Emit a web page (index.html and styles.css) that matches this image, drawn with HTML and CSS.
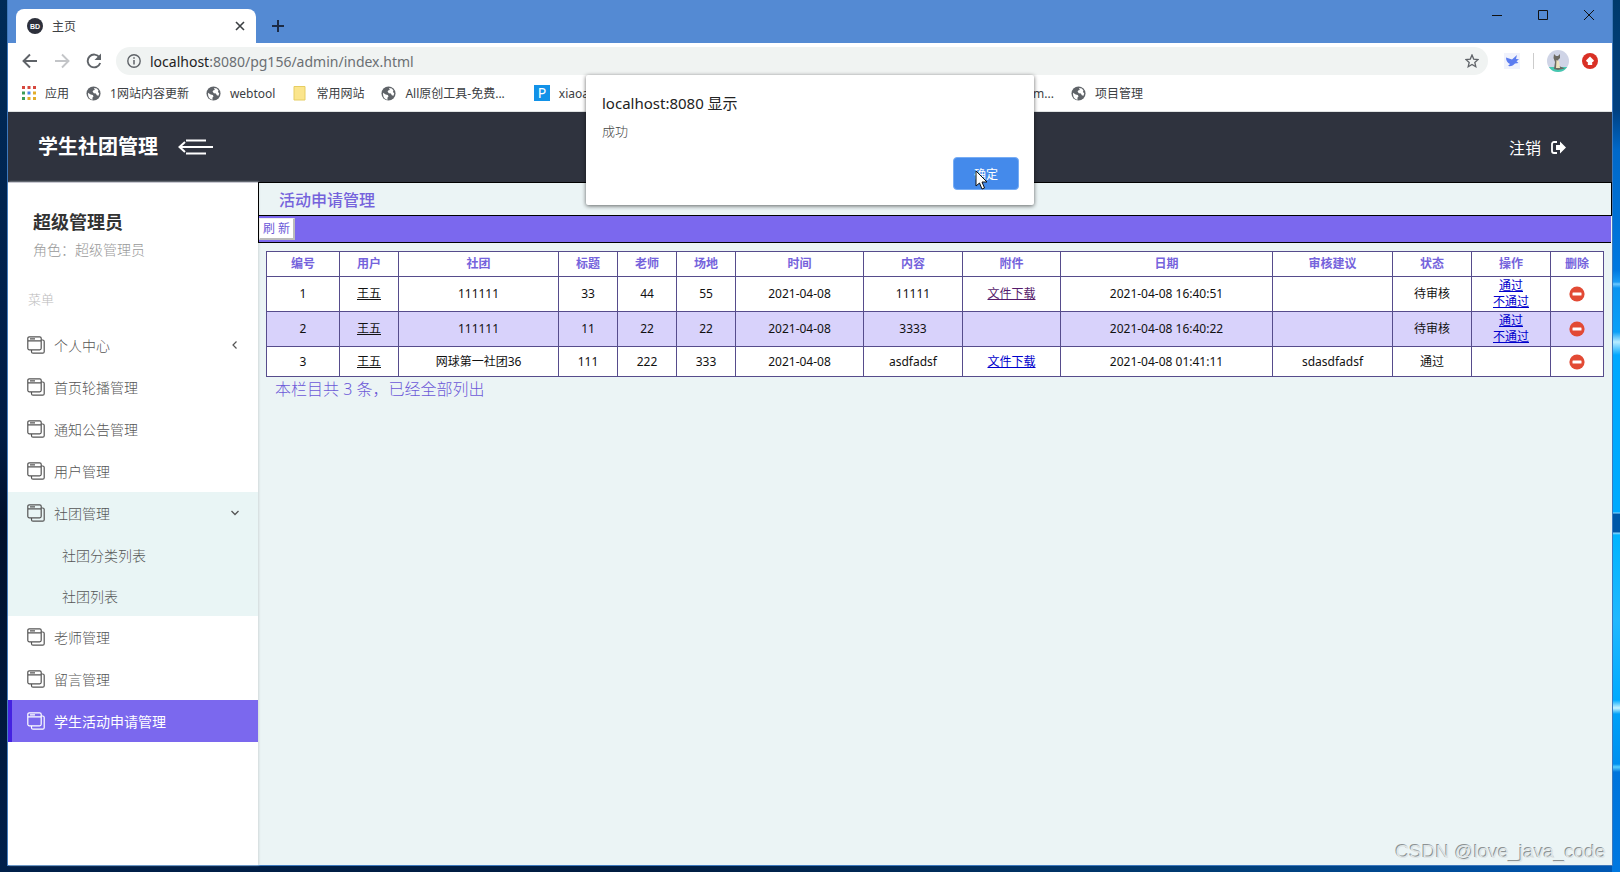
FILE: index.html
```html
<!DOCTYPE html>
<html lang="zh-CN">
<head>
<meta charset="utf-8">
<title>主页</title>
<link rel="stylesheet" href="styles.css">
</head>
<body>
<svg class="defs" aria-hidden="true">
  <symbol id="globe" viewBox="0 0 16 16"><circle cx="8" cy="8" r="7.5" fill="#5f6368"/><path d="M2.2 7.2 5 9l2.300.6.7 1.600-1.200 1.300.2 2.100C4 14.300 1.800 11.500 2.200 7.200zM8.500 2l3 .6 1.800 2.200-.6 1.700 1.400 1.200-.8 2.700-1.800-.6-.9-1.700-2.300-.5-1.300-1.700 1-1.400 1.400-.3z" fill="#fff"/></symbol>
  <symbol id="windows" viewBox="0 0 18 18"><g fill="none" stroke="currentColor" stroke-width="1.200"><rect x=".8" y=".8" width="13.400" height="13" rx="1.500"/><path d="M1 4.800h13M3 2.900h5M14.300 4h1.400a1.500 1.500 0 0 1 1.500 1.500v10.200a1.500 1.500 0 0 1-1.500 1.500H6a1.500 1.500 0 0 1-1.500-1.500V14"/></g></symbol>
  <symbol id="remove" viewBox="0 0 16 16"><circle cx="8" cy="8" r="7.600" fill="#e24a34"/><rect x="3.500" y="6.500" width="9" height="3" rx=".5" fill="#fff"/></symbol>
</svg>
<div class="desktop">
  <div class="browser">
    <div class="titlebar">
      <div class="tab">
        <svg class="i16" viewBox="0 0 16 16"><circle cx="8" cy="8" r="8" fill="#2d303b"/><text x="8" y="10.500" text-anchor="middle" class="fav">BD</text></svg>
        <span>主页</span>
        <button class="plain tab-close" aria-label="关闭标签页"><svg class="i10" viewBox="0 0 10 10"><path d="M1 1l8 8M9 1 1 9" stroke="#3c4043" stroke-width="1.600"/></svg></button>
      </div>
      <button class="plain new-tab" aria-label="新标签页"><svg class="i12" viewBox="0 0 12 12"><path d="M6 0v12M0 6h12" stroke="#1c2b45" stroke-width="2"/></svg></button>
      <div class="controls">
        <button class="plain" aria-label="最小化"><svg class="i10" viewBox="0 0 10 10"><path d="M0 5.500h10" stroke="#111"/></svg></button>
        <button class="plain" aria-label="最大化"><svg class="i10" viewBox="0 0 10 10"><path d="M.5.500h9v9h-9z" stroke="#111" fill="none"/></svg></button>
        <button class="plain" aria-label="关闭"><svg class="i10" viewBox="0 0 10 10"><path d="M0 0l10 10M10 0 0 10" stroke="#111"/></svg></button>
      </div>
    </div>
    <div class="toolbar">
      <button class="plain nav" aria-label="后退"><svg class="i16" viewBox="0 0 16 16"><path d="M15 8H2M8 1.500 1.500 8 8 14.500" fill="none" stroke="#5f6368" stroke-width="1.900"/></svg></button>
      <button class="plain nav" aria-label="前进"><svg class="i16" viewBox="0 0 16 16"><path d="M1 8h13M8 1.500 14.500 8 8 14.500" fill="none" stroke="#c3c5c8" stroke-width="1.900"/></svg></button>
      <button class="plain nav" aria-label="刷新页面"><svg class="i16" viewBox="0 0 16 16"><path d="M13.500 4.500A6.400 6.400 0 1 0 14.200 10" fill="none" stroke="#5f6368" stroke-width="1.900"/><path d="M15 .5V7H8.500z" fill="#5f6368"/></svg></button>
      <div class="omnibox">
        <svg class="i14" viewBox="0 0 14 14"><circle cx="7" cy="7" r="6.200" fill="none" stroke="#5f6368" stroke-width="1.400"/><path d="M7 6v4.500M7 3.300v1.500" stroke="#5f6368" stroke-width="1.500"/></svg>
        <span class="url"><b>localhost</b>:8080/pg156/admin/index.html</span>
        <button class="plain" aria-label="收藏"><svg class="i14" viewBox="0 0 14 14"><path d="M7 1l1.700 4.100 4.400.4-3.300 2.900 1 4.300L7 10.400l-3.800 2.300 1-4.300L.9 5.500l4.400-.4z" fill="none" stroke="#5f6368" stroke-width="1.300"/></svg></button>
      </div>
      <div class="extensions">
        <svg class="i16" viewBox="0 0 16 16"><rect width="16" height="16" fill="#f0f2fc"/><path d="M2 4.500 8 6.500 13 2l-1 4 3 .3-2.500 2 2 1.700-3.500.5C9.500 12.500 7 13.500 4 13l2-2C3.500 10 2 7.500 2 4.500z" fill="#5b7cf0"/></svg>
        <i class="divider"></i>
        <svg class="i22" viewBox="0 0 22 22"><clipPath id="round"><circle cx="11" cy="11" r="11"/></clipPath><g clip-path="url(#round)"><path fill="#cfd4e6" d="M0 0h22v22H0z"/><path fill="#45c8b0" d="M0 17h22v5H0z"/><path d="M7 4l2 2h2l2-2v4l-2 2 1 6 6 2.500-7 1.500-4-1 1-7-1.500-4z" fill="#6c6a62"/><path d="M9.500 10l2.500 1 1 7H9z" fill="#eee2bd"/></g></svg>
        <svg class="i16" viewBox="0 0 16 16"><circle cx="8" cy="8" r="8" fill="#d93025"/><path d="M8 3.500 12 7.500 11 9h-.8v3H5.800V9H5L4 7.500z" fill="#fff"/></svg>
      </div>
    </div>
    <nav class="bookmarks" aria-label="书签">
      <a href="#"><svg class="i14" viewBox="0 0 14 14"><path fill="#d6483e" d="M0 0h3v3H0zM5.500 0h3v3h-3zM11 0h3v3h-3z"/><path fill="#3c9d58" d="M0 5.500h3v3H0zM0 11h3v3H0z"/><path fill="#4a86e8" d="M5.500 5.500h3v3h-3z"/><path fill="#e2ac29" d="M11 5.500h3v3h-3zM5.500 11h3v3h-3zM11 11h3v3h-3z"/></svg>应用</a>
      <a href="#"><svg class="i15"><use href="#globe"/></svg>1网站内容更新</a>
      <a href="#"><svg class="i15"><use href="#globe"/></svg>webtool</a>
      <a href="#"><svg class="i15" viewBox="0 0 15 15"><path d="M2 .5h11v13.500H2z" fill="#fbe58c" stroke="#e6cd62"/></svg>常用网站</a>
      <a href="#" class="wide"><svg class="i15"><use href="#globe"/></svg>All原创工具-免费...</a>
      <a href="#"><svg class="i16" viewBox="0 0 16 16"><path fill="#1292e8" d="M0 0h16v16H0z"/><text x="8" y="13" text-anchor="middle" class="pp">P</text></svg>xiaoa</a>
      <a href="#" class="later">com...</a>
      <a href="#"><svg class="i15"><use href="#globe"/></svg>项目管理</a>
    </nav>

    <header class="site-header">
      <h1>学生社团管理</h1>
      <button class="plain" aria-label="收起菜单"><svg class="collapse" viewBox="0 0 36 16"><path d="M8 1.500h20M1 8h34M8 14.500h20M7 3 1.500 8 7 13" fill="none" stroke="#fff" stroke-width="2"/></svg></button>
      <a class="logout" href="#">注销<svg class="i15" viewBox="0 0 15 15"><path d="M6 2H3a2 2 0 0 0-2 2v7a2 2 0 0 0 2 2h3" fill="none" stroke="#fff" stroke-width="1.800"/><path d="M5 5h4V1.500l6 6-6 6V10H5z" fill="#fff"/></svg></a>
    </header>

    <div class="page">
      <aside class="sidebar">
        <div class="profile"><h2>超级管理员</h2><p>角色：超级管理员</p></div>
        <div class="caption">菜单</div>
        <nav class="menu">
          <a href="#"><svg><use href="#windows"/></svg>个人中心<svg class="arrow" viewBox="0 0 8 8"><path d="M5.500.500 2 4l3.500 3.500" fill="none" stroke="currentColor" stroke-width="1.200"/></svg></a>
          <a href="#"><svg><use href="#windows"/></svg>首页轮播管理</a>
          <a href="#"><svg><use href="#windows"/></svg>通知公告管理</a>
          <a href="#"><svg><use href="#windows"/></svg>用户管理</a>
          <div class="open">
            <a href="#"><svg><use href="#windows"/></svg>社团管理<svg class="arrow" viewBox="0 0 8 8"><path d="M.5 2 4 5.500 7.500 2" fill="none" stroke="currentColor" stroke-width="1.300"/></svg></a>
            <a href="#" class="sub">社团分类列表</a>
            <a href="#" class="sub">社团列表</a>
          </div>
          <a href="#"><svg><use href="#windows"/></svg>老师管理</a>
          <a href="#"><svg><use href="#windows"/></svg>留言管理</a>
          <a href="#" class="active"><svg><use href="#windows"/></svg>学生活动申请管理</a>
        </nav>
      </aside>
      <main class="content">
        <h3>活动申请管理</h3>
        <div class="actions"><button class="refresh">刷 新</button></div>
        <div class="list">
          <table>
            <colgroup><col class="w73"><col class="w59"><col class="w160"><col class="w59"><col class="w59"><col class="w59"><col class="w128"><col class="w99"><col class="w98"><col class="w212"><col class="w120"><col class="w79"><col class="w79"><col class="w53"></colgroup>
            <thead><tr><th>编号</th><th>用户</th><th>社团</th><th>标题</th><th>老师</th><th>场地</th><th>时间</th><th>内容</th><th>附件</th><th>日期</th><th>审核建议</th><th>状态</th><th>操作</th><th>删除</th></tr></thead>
            <tbody>
              <tr class="tall"><td>1</td><td><a class="user" href="#">王五</a></td><td>111111</td><td>33</td><td>44</td><td>55</td><td>2021-04-08</td><td>11111</td><td><a class="visited" href="#">文件下载</a></td><td>2021-04-08 16:40:51</td><td></td><td>待审核</td><td><a href="#">通过</a><br><a href="#">不通过</a></td><td><button class="plain" aria-label="删除"><svg class="i16"><use href="#remove"/></svg></button></td></tr>
              <tr class="tall hover"><td>2</td><td><a class="user" href="#">王五</a></td><td>111111</td><td>11</td><td>22</td><td>22</td><td>2021-04-08</td><td>3333</td><td></td><td>2021-04-08 16:40:22</td><td></td><td>待审核</td><td><a href="#">通过</a><br><a href="#">不通过</a></td><td><button class="plain" aria-label="删除"><svg class="i16"><use href="#remove"/></svg></button></td></tr>
              <tr><td>3</td><td><a class="user" href="#">王五</a></td><td>网球第一社团36</td><td>111</td><td>222</td><td>333</td><td>2021-04-08</td><td>asdfadsf</td><td><a href="#">文件下载</a></td><td>2021-04-08 01:41:11</td><td>sdasdfadsf</td><td>通过</td><td></td><td><button class="plain" aria-label="删除"><svg class="i16"><use href="#remove"/></svg></button></td></tr>
            </tbody>
          </table>
          <p class="total">本栏目共 3 条，已经全部列出</p>
        </div>
      </main>
    </div>

    <div class="dialog" role="alertdialog" aria-labelledby="dlg-title">
      <div class="dlg-title" id="dlg-title">localhost:8080 显示</div>
      <div class="dlg-text">成功</div>
      <button class="ok">确定<svg class="cursor" viewBox="0 0 13 20"><path d="M1 1v15l3.500-3 2.500 6 2.500-1-2.500-6H12z" fill="#fff" stroke="#111"/></svg></button>
    </div>
  </div>
  <div class="watermark">CSDN @love_java_code</div>
</div>
</body>
</html>
```
FILE: styles.css
```css
* { box-sizing: border-box; }
body, h1, h2, h3, p { margin: 0; }
body { font-family: "Noto Sans", "Noto Sans CJK SC", sans-serif; font-size: 12px; color: #222; }
a { text-decoration: none; color: inherit; }
svg { display: block; flex: none; }
.defs { position: absolute; width: 0; height: 0; }
.plain { border: 0; background: none; padding: 0; display: block; }
.i10 { width: 10px; height: 10px; }
.i12 { width: 12px; height: 12px; }
.i14 { width: 14px; height: 14px; }
.i15 { width: 15px; height: 15px; }
.i16 { width: 16px; height: 16px; }
.i22 { width: 22px; height: 22px; }
.fav { font: bold 7px "Liberation Sans", sans-serif; fill: #fff; }
.pp { font: 14px "Noto Sans", sans-serif; fill: #fff; }

.desktop {
  position: relative;
  min-height: 100vh;
  padding: 0 8px 7px;
  display: flex;
  background:
    linear-gradient(#003a6c 0, #004080 110px, #0068c8 150px, #0078e0 270px, #1a9cf4 282px, #6cc8ff 284px, #0a94f0 288px, #0aa0f8 332px, #b8ecff 342px, #00a8ff 355px, #00aaff 512px, #8cd8ff 513px, #0058a8 514px, #0058a8 532px, #8cd8ff 533px, #00b4ff 535px, #20b8ff 620px, #00aaff 700px, #c8f4ff 708px, #00a0f8 714px, #0090f0 764px, #58d0ff 767px, #0074dc 772px, #0078e0 100%) right / 8px 100% no-repeat,
    linear-gradient(90deg, #00204a, #001c40 40%, #003c74 75%, #0058b4) bottom / 100% 7px no-repeat,
    linear-gradient(#002c58, #00204c 35%, #001c44 50%, #00102c 60%, #00204c);
}
.browser { position: relative; flex: 1; display: flex; flex-direction: column; background: #fff; box-shadow: 0 0 0 1px #3d78bc; min-width: 0; }
.titlebar { height: 43px; display: flex; align-items: flex-start; background: #548ad3; }
.tab { width: 240px; height: 34px; margin: 9px 0 0 8px; padding: 0 11px; display: flex; align-items: center; gap: 9px; background: #fff; border-radius: 8px 8px 0 0; color: #3c4043; }
.tab-close { margin-left: auto; }
.new-tab { margin: 20px 0 0 16px; }
.controls { margin-left: auto; display: flex; gap: 36px; padding: 10px 18px; }
.toolbar { height: 36px; display: flex; align-items: center; padding: 0 14px; gap: 16px; }
.omnibox { flex: 1; height: 28px; display: flex; align-items: center; gap: 9px; padding: 0 9px 0 11px; margin-left: -2px; border-radius: 14px; background: #f0f3f2; font-size: 14px; color: #6b6f73; }
.url { flex: 1; }
.url b { font-weight: 400; color: #222; }
.extensions { display: flex; align-items: center; gap: 13px; }
.divider { width: 1px; height: 16px; background: #ccc; }
.bookmarks { height: 33px; display: flex; align-items: center; gap: 17px; padding: 0 14px 4px; border-bottom: 1px solid #e0e3e3; color: #3c4043; white-space: nowrap; }
.bookmarks a { display: flex; align-items: center; gap: 9px; }
.bookmarks .wide { margin-right: 12px; }
.bookmarks .later { margin-left: auto; }
.bookmarks a:last-child { margin-right: 455px; }

.site-header { height: 70px; padding: 0 46px 0 30px; display: flex; align-items: center; background: #2f333e; color: #fff; }
.site-header h1 { font-size: 20px; line-height: 30px; margin-right: 20px; }
.collapse { width: 36px; height: 16px; }
.logout { margin-left: auto; display: flex; align-items: center; gap: 10px; font-size: 16px; }

.page { flex: 1; display: flex; background: #ebf4f5; }
.sidebar { width: 250px; flex: none; background: #fff; border-top: 1px solid #c9c9d2; box-shadow: 1px 0 2px #d0d8d9; }
.profile { padding: 25px 25px 0; }
.profile h2 { font-size: 18px; line-height: 28px; color: #333; }
.profile p { font-size: 14px; line-height: 28px; font-weight: 300; color: #999; }
.caption { padding: 23px 20px 0; line-height: 24px; font-size: 13px; color: #bbb; font-weight: 300; }
.menu { padding-top: 13px; }
.menu a { height: 42px; display: flex; align-items: center; gap: 9px; padding: 0 19px; font-size: 14px; font-weight: 300; color: #555; }
.menu svg { width: 18px; height: 18px; }
.menu .arrow { width: 8px; height: 8px; margin-left: auto; }
.open { background: #e9f5f5; }
.menu .sub { height: 41px; padding-left: 54px; }
.menu .active { background: #7b68ee; border-left: 4px solid #4422e0; padding-left: 15px; color: #fff; font-weight: 400; }

.content { flex: 1; min-width: 0; }
.content h3 { height: 34px; padding: 0 20px; border: 1px solid #000; font-size: 16px; line-height: 34px; font-weight: 500; color: #7563dc; }
.actions { height: 27px; padding: 2px 0; margin-right: 1px; border-left: 1px solid #000; border-bottom: 1px solid #000; background: #7b68ee; }
.refresh { display: block; height: 22px; padding: 0 3px; border: 1px solid #eee; border-right: 2px solid #bbb; border-bottom: 2px solid #bbb; background: #fff; color: #6b58d8; font: 12px/18px "Noto Sans", "Noto Sans CJK SC", sans-serif; }
.list { padding: 8px 9px 0 8px; }
table { width: 100%; table-layout: fixed; border-collapse: collapse; background: #fff; text-align: center; color: #111; }
th, td { border: 1px solid #564c8c; padding: 0; line-height: 16px; }
th { height: 25px; color: #7563dc; font-weight: 700; }
td { height: 30px; }
.tall td { height: 35px; }
.hover { background: #d8d2fb; }
td a { color: #00c; text-decoration: underline; }
td .user { color: #111; }
td .visited { color: #551a6b; }
td .plain { margin: 0 auto; }
.w53 { width: 53px; } .w59 { width: 59px; } .w73 { width: 73px; } .w79 { width: 79px; }
.w98 { width: 98px; } .w99 { width: 99px; } .w120 { width: 120px; } .w128 { width: 128px; }
.w160 { width: 160px; } .w212 { width: 212px; }
.total { padding: 0 9px; font-size: 16px; line-height: 24px; font-weight: 300; color: #6b58d8; }

.dialog { position: absolute; top: 75px; left: 50%; width: 448px; margin-left: -224px; padding: 15px 15px 15px 16px; background: #fff; border-radius: 2px; box-shadow: 0 1px 4px #0009; }
.dlg-title { font-size: 15px; line-height: 26px; color: #222; }
.dlg-text { font-size: 13px; line-height: 30px; font-weight: 300; color: #444; }
.ok { position: relative; display: block; width: 66px; height: 33px; margin: 11px 0 0 auto; border: 1px solid #77adf5; border-radius: 4px; background: #448aeb; color: #fff; font: 12px "Noto Sans", "Noto Sans CJK SC", sans-serif; }
.cursor { position: absolute; left: 21px; top: 12px; width: 13px; height: 20px; }
.watermark { position: absolute; right: 14px; bottom: 8px; font: 19px/24px "Liberation Sans", sans-serif; color: #dfe5e6; text-shadow: -1px -1px 0 #8d9394; }
```
